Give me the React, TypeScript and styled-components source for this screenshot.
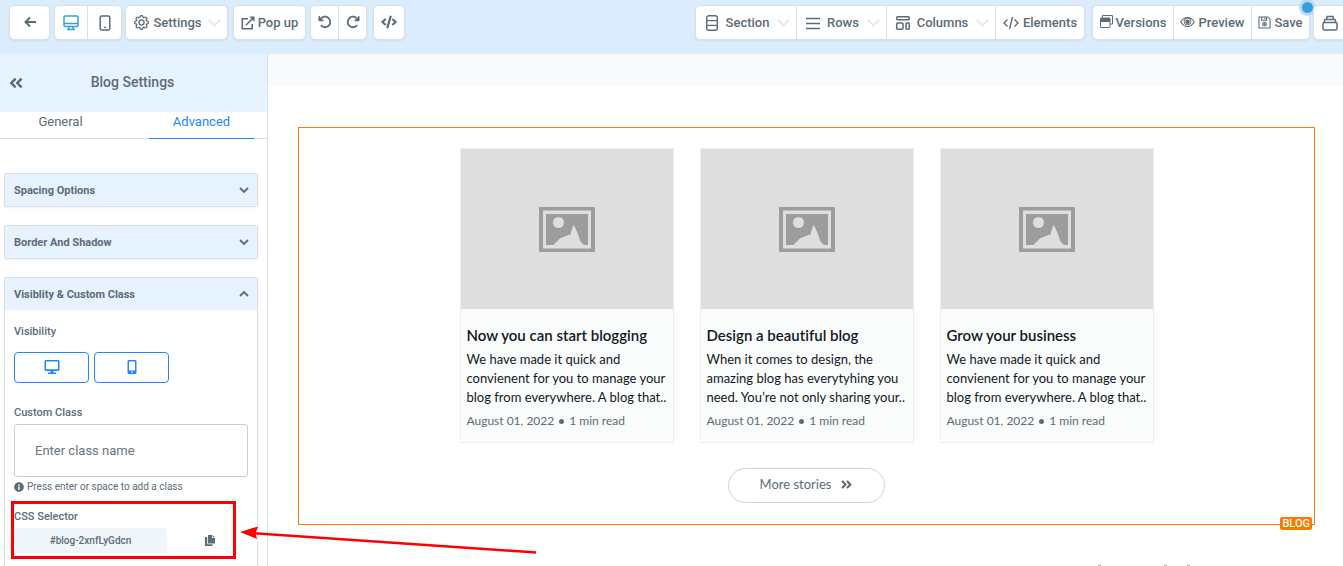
import React from 'react';
import styled, { createGlobalStyle, css } from 'styled-components';
import {
  FaAngleDoubleLeft,
  FaAngleDoubleRight,
  FaCode,
  FaInfoCircle,
} from 'react-icons/fa';
import { FaArrowRotateLeft, FaArrowRotateRight } from 'react-icons/fa6';
import { BsGear } from 'react-icons/bs';

const color = {
  bar: '#dbecfd',
  panel: '#e6f2fe',
  ink: '#5c6c75',
  line: '#dadfe4',
  blue: '#2388f7',
  orange: '#ff7900',
};

const GlobalStyle = createGlobalStyle`
  *, *::before, *::after { box-sizing: border-box; }
  body { margin: 0; background: #fff; color: ${color.ink}; font-family: Roboto, "Liberation Sans", sans-serif; }
  button, input { font: inherit; color: inherit; margin: 0; }
  button { cursor: pointer; }
  svg { display: block; flex: none; }
`;

const Page = styled.div`
  position: relative;
  display: flex;
  flex-direction: column;
  height: 100vh;
  overflow: hidden;
`;

const Toolbar = styled.header`
  display: flex;
  flex: none;
  height: 54px;
  padding: 5px 0 0 9px;
  background: ${color.bar};
  overflow: hidden;
`;

const ToolGroup = styled.div<{ $after?: number; $push?: boolean }>`
  position: relative;
  display: flex;
  flex: none;
  height: 35px;
  margin-right: ${(p) => p.$after ?? 4}px;
  ${(p) => p.$push && css`margin-left: auto;`}
  background: #fff;
  border: 1px solid ${color.line};
  border-radius: 5px;
  box-shadow: 0 1px 2px rgba(120, 150, 180, 0.15);
`;

const ToolButton = styled.button<{ $width: number; $gap?: number; $active?: boolean }>`
  display: flex;
  align-items: center;
  justify-content: center;
  gap: ${(p) => p.$gap ?? 4}px;
  width: ${(p) => p.$width}px;
  padding: 0;
  border: 0;
  background: none;
  color: ${(p) => (p.$active ? '#35a0dc' : color.ink)};
  font-size: 13px;
  font-weight: 500;
  line-height: 16px;
  white-space: nowrap;
  & + & { border-left: 1px solid ${color.line}; }
`;

const IconButton = styled(ToolButton)`
  padding-bottom: 2px;
`;

const Caret = styled.span`
  width: 9px;
  height: 9px;
  margin: 0 0 4px 4px;
  border: solid #e4e7ec;
  border-width: 0 2px 2px 0;
  transform: rotate(45deg);
`;

const NoticeDot = styled.span`
  position: absolute;
  top: -7px;
  right: -7px;
  width: 17px;
  height: 17px;
  border: 3px solid #b9dcf5;
  border-radius: 50%;
  background: #35a0dc;
`;

const Workspace = styled.div`
  display: flex;
  flex: 1;
  min-height: 0;
`;

const Sidebar = styled.aside`
  flex: none;
  width: 268px;
  border-right: 1px solid ${color.line};
  overflow: hidden;
`;

const SidebarHeader = styled.div`
  display: grid;
  grid-template-columns: 32px 1fr 34px;
  align-items: center;
  height: 58px;
  padding-bottom: 2px;
  background: ${color.panel};
`;

const CollapseButton = styled.button`
  display: flex;
  padding: 2px 0 0 8px;
  border: 0;
  background: none;
`;

const SidebarTitle = styled.h1`
  margin: 0;
  font-size: 14px;
  font-weight: 500;
  line-height: 20px;
  text-align: center;
`;

const Tabs = styled.div`
  display: flex;
  justify-content: space-between;
  height: 27px;
  padding: 0 13px 0 8px;
  border-bottom: 1px solid ${color.line};
`;

const Tab = styled.button<{ $active?: boolean }>`
  width: 105px;
  height: 27px;
  padding: 0 0 6px;
  border: 0;
  border-bottom: 1px solid ${(p) => (p.$active ? color.blue : 'transparent')};
  background: none;
  color: ${(p) => (p.$active ? color.blue : color.ink)};
  font-size: 13px;
  line-height: 18px;
`;

const Sections = styled.div`
  display: flex;
  flex-direction: column;
  gap: 18px;
  padding: 34px 9px 0 4px;
`;

const Section = styled.section`
  border: 1px solid ${color.line};
  border-radius: 2px;
  box-shadow: 0 1px 2px rgba(120, 140, 160, 0.12);
`;

const SectionToggle = styled.button`
  display: flex;
  align-items: center;
  justify-content: space-between;
  width: 100%;
  height: 32px;
  padding: 0 8px 0 9px;
  border: 0;
  background: ${color.panel};
  font-size: 11px;
  font-weight: 700;
`;

const SectionBody = styled.div`
  padding: 14px 9px 40px;
`;

const FieldLabel = styled.label`
  display: block;
  font-size: 11px;
  font-weight: 500;
  line-height: 16px;
`;

const FieldTitle = styled(FieldLabel).attrs({ as: 'div' })``;

const DeviceRow = styled.div`
  display: flex;
  gap: 5px;
  margin: 12px 0 22px;
`;

const DeviceButton = styled.button`
  display: flex;
  justify-content: center;
  align-items: center;
  width: 75px;
  height: 31px;
  padding: 0 0 2px;
  border: 1px solid ${color.blue};
  border-radius: 4px;
  background: #fff;
  color: ${color.blue};
`;

const ClassInput = styled.input`
  display: block;
  width: 100%;
  height: 53px;
  margin-top: 3px;
  padding: 0 20px;
  border: 1px solid #c6cfd9;
  border-radius: 3px;
  font-size: 13px;
  &::placeholder { color: #6c757d; opacity: 1; }
`;

const Hint = styled.p`
  display: flex;
  align-items: center;
  gap: 3px;
  margin: 3px 0 15px;
  font-size: 10px;
  line-height: 14px;
`;

const SelectorRow = styled.div`
  display: flex;
  align-items: center;
  gap: 38px;
  margin-top: 3px;
`;

const SelectorCode = styled.output`
  width: 153px;
  border-radius: 3px;
  background: #f0f5fa;
  font-size: 10px;
  font-weight: 500;
  line-height: 25px;
  text-align: center;
`;

const CopyButton = styled.button`
  display: flex;
  padding: 0;
  border: 0;
  background: none;
`;

const Canvas = styled.main`
  flex: 1;
  min-width: 0;
  overflow: hidden;
`;

const CanvasBand = styled.div`
  height: 32px;
  background: #f8fafc;
`;

const BlogBlock = styled.section`
  position: relative;
  display: flex;
  flex-direction: column;
  align-items: center;
  margin: 41px 28px 0 30px;
  padding: 20px 0 21px;
  border: 1px solid ${color.orange};
  font-family: Lato, "Liberation Sans", sans-serif;
`;

const BlockTag = styled.span`
  position: absolute;
  right: 2px;
  bottom: -6px;
  padding: 0 2px;
  border-radius: 2px;
  background: ${color.orange};
  color: #fff;
  font-family: Roboto, "Liberation Sans", sans-serif;
  font-size: 11px;
  font-weight: 500;
  line-height: 13px;
`;

const Posts = styled.div`
  display: grid;
  grid-template-columns: repeat(3, 214px);
  gap: 26px;
`;

const Post = styled.article`
  border: 1px solid #eceeef;
  background: #fafcfc;
`;

const PostImage = styled.div`
  display: flex;
  justify-content: center;
  align-items: center;
  height: 160px;
  background: #dedede;
`;

const PostBody = styled.div`
  padding: 16px 6px 13px;
`;

const PostTitle = styled.h2`
  margin: 0 0 5px;
  color: #12181f;
  font-size: 15px;
  font-weight: 600;
  line-height: 20px;
  font-variant-ligatures: none;
  white-space: nowrap;
`;

const PostText = styled.p`
  margin: 0 0 6px;
  color: #12181f;
  font-size: 13px;
  line-height: 19px;
  white-space: pre-line;
`;

const PostMeta = styled.div`
  display: flex;
  align-items: center;
  gap: 5px;
  font-size: 12px;
  line-height: 16px;
`;

const Bullet = styled.span`
  width: 5px;
  height: 5px;
  border-radius: 50%;
  background: ${color.ink};
`;

const MoreButton = styled.button`
  display: flex;
  align-items: center;
  justify-content: center;
  gap: 9px;
  width: 157px;
  height: 35px;
  margin-top: 25px;
  padding: 0 0 3px;
  border: 1px solid #cfd2dc;
  border-radius: 18px;
  background: #fff;
  font-size: 13px;
`;

const NextHeading = styled.svg`
  margin: 40px 0 0 828px;
`;

const Highlight = styled.div`
  position: absolute;
  top: 501px;
  left: 11px;
  width: 225px;
  height: 58px;
  border: 3px solid #f00;
  pointer-events: none;
`;

const Pointer = styled.svg`
  position: absolute;
  top: 520px;
  left: 240px;
  pointer-events: none;
`;

const Line = ({ size = 16, width = 2, children }: { size?: number; width?: number; children: React.ReactNode }) => (
  <svg width={size} height={size} viewBox="0 0 16 16" fill="none" stroke="currentColor" strokeWidth={width} aria-hidden="true">
    {children}
  </svg>
);

const BackIcon = () => (
  <Line><path d="M8 3.5 3.5 8 8 12.5M4 8h10" /></Line>
);

const MonitorIcon = () => (
  <Line width={1.5}>
    <rect x="1" y="1" width="14" height="10.5" rx="1.2" />
    <path d="M1 8.5h14M6 11.5v3M10 11.5v3M4 14.5h8" />
  </Line>
);

const PhoneIcon = () => (
  <Line width={1.5}>
    <rect x="3.2" y="1" width="9.6" height="14" rx="1.6" />
    <path d="M7 12.4h2" strokeWidth="1.2" />
  </Line>
);

const PopupIcon = () => (
  <Line size={14} width={1.8}>
    <path d="M8 3.2H1.5v11.3h11.3V9M5.5 10.5l8-8" />
    <path d="M9.5.5h6v6z" fill="currentColor" stroke="none" />
  </Line>
);

const SectionIcon = () => (
  <Line width={1.4}>
    <rect x="2.7" y=".8" width="10.6" height="14.4" rx="2" />
    <path d="M2.7 5.6h10.6M2.7 10.4h10.6" />
  </Line>
);

const RowsIcon = () => (
  <Line width={1.5}><path d="M1 3.5h14M1 8.5h14M1 13.5h14" /></Line>
);

const ColumnsIcon = () => (
  <Line width={1.5}>
    <rect x="1.7" y="1.7" width="12.6" height="3" rx="1" />
    <rect x="1.7" y="8" width="6.3" height="6.3" rx="1" />
    <rect x="11" y="8" width="3.3" height="6.3" rx="1" />
  </Line>
);

const ThinCodeIcon = () => (
  <Line width={1.4}><path d="M4.5 4.5 1 8l3.5 3.5M11.5 4.5 15 8l-3.5 3.5M9.5 2l-3 12" /></Line>
);

const VersionsIcon = () => (
  <svg width="13" height="15" viewBox="0 0 13 15" fill="none" stroke="currentColor" aria-hidden="true">
    <path d="M2.5 2.5V.5h10v8.5h-2" />
    <rect x=".5" y="3" width="9.5" height="9.5" rx=".5" />
    <path fill="currentColor" stroke="none" d="M.5 3H10v4H.5z" />
  </svg>
);

const EyeIcon = () => (
  <svg width="15" height="14" viewBox="0 0 15 14" fill="none" stroke="currentColor" strokeWidth="1.2" aria-hidden="true">
    <path d="M.8 6C2.5 3 4.8 1.5 7.5 1.5S12.5 3 14.2 6C12.5 9 10.2 10.5 7.5 10.5S2.5 9 .8 6z" />
    <circle cx="7.5" cy="5.5" r="3.4" strokeWidth="1" />
    <circle cx="7.5" cy="5.8" r="2.2" fill="currentColor" stroke="none" />
  </svg>
);

const SaveIcon = () => (
  <Line size={13} width={1.3}>
    <path d="M1.2 1.2h10.8l2.8 2.8v10.8H1.2z M4.5 1.5v3.7h6V1.5M8.5 2v2" />
    <circle cx="8" cy="10" r="2.3" />
    <circle cx="8" cy="10" r=".6" />
  </Line>
);

const StackIcon = () => (
  <Line width={1.5}>
    <rect x="1" y="7.5" width="14" height="7.5" rx="1.5" />
    <path d="M2 7.5l1-3h10l1 3M4.5 4.5l.5-3h6l.5 3" />
  </Line>
);

const CopyIcon = () => (
  <svg width="10" height="11" viewBox="0 0 10 11" fill="currentColor" aria-hidden="true">
    <path d="M3 0h4v3h3v5.5H3zM7.7 0 10 2.3H7.7zM0 2h2.2v7.3H7.5V11H0z" />
  </svg>
);

const ChevronIcon = ({ up = false }: { up?: boolean }) => (
  <svg width="10" height="10" viewBox="0 0 10 10" fill="none" stroke="currentColor" strokeWidth="1.8" aria-hidden="true">
    <path d={up ? 'M1 7l4-4 4 4' : 'M1 3l4 4 4-4'} />
  </svg>
);

const DesktopIcon = () => (
  <svg width="16" height="14" viewBox="0 0 16 14" fill="currentColor" aria-hidden="true">
    <path fillRule="evenodd" d="M1.5 0h13l1 1v9l-1 1H9.5v1.5H12V14H4v-1.5h2.5V11h-5l-1-1V1zM2 1.5v7.7h12V1.5z" />
  </svg>
);

const MobileIcon = () => (
  <svg width="10" height="14" viewBox="0 0 10 14" fill="currentColor" aria-hidden="true">
    <path fillRule="evenodd" d="M1.5 0h7l1 1v12l-1 1h-7l-1-1V1zM2 1.5v9h6v-9zM4.3 11.5v1.3h1.4v-1.3z" />
  </svg>
);

const PictureIcon = () => (
  <svg width="56" height="45" viewBox="0 0 56 45" aria-hidden="true">
    <path fill="#9d9d9d" fillRule="evenodd" d="M0 0h56v45H0zM4 3.5v38h48v-38z" />
    <path fill="#9d9d9d" d="M7 7h42v31H7z" />
    <circle cx="19.5" cy="15.5" r="5.5" fill="#dedede" />
    <path fill="#dedede" d="M14.5 38l6.5-6.8 10.5-4L34.5 17.5l3 6L41.5 34.5 45 38z" />
  </svg>
);

const posts = [
  {
    title: 'Now you can start blogging',
    text: 'We have made it quick and\nconvienent for you to manage your\nblog from everywhere. A blog that..',
  },
  {
    title: 'Design a beautiful blog',
    text: 'When it comes to design, the\namazing blog has everytyhing you\nneed. You’re not only sharing your..',
  },
  {
    title: 'Grow your business',
    text: 'We have made it quick and\nconvienent for you to manage your\nblog from everywhere. A blog that..',
  },
];

export default function App() {
  return (
    <Page>
      <GlobalStyle />
      <Toolbar>
        <ToolGroup>
          <IconButton $width={39} aria-label="Back"><BackIcon /></IconButton>
        </ToolGroup>
        <ToolGroup $after={3}>
          <ToolButton $width={32} $active aria-label="Desktop view"><MonitorIcon /></ToolButton>
          <ToolButton $width={34} aria-label="Mobile view"><PhoneIcon /></ToolButton>
        </ToolGroup>
        <ToolGroup $after={5}>
          <ToolButton $width={101}><BsGear size={15} strokeWidth={0.4} />Settings<Caret /></ToolButton>
        </ToolGroup>
        <ToolGroup>
          <ToolButton $width={71} $gap={3}><PopupIcon />Pop up</ToolButton>
        </ToolGroup>
        <ToolGroup $after={6}>
          <IconButton $width={27} aria-label="Undo"><FaArrowRotateLeft size={14} /></IconButton>
          <IconButton $width={28} aria-label="Redo"><FaArrowRotateRight size={14} /></IconButton>
        </ToolGroup>
        <ToolGroup>
          <IconButton $width={30} aria-label="Code"><FaCode size={16} /></IconButton>
        </ToolGroup>

        <ToolGroup $push $after={7}>
          <ToolButton $width={100} $gap={6}><SectionIcon />Section<Caret /></ToolButton>
          <ToolButton $width={90} $gap={6}><RowsIcon />Rows<Caret /></ToolButton>
          <ToolButton $width={109} $gap={6}><ColumnsIcon />Columns<Caret /></ToolButton>
          <ToolButton $width={89}><ThinCodeIcon />Elements</ToolButton>
        </ToolGroup>
        <ToolGroup $after={3}>
          <ToolButton $width={80} $gap={3}><VersionsIcon />Versions</ToolButton>
          <ToolButton $width={78} $gap={3}><EyeIcon />Preview</ToolButton>
          <ToolButton $width={58} $gap={3}><SaveIcon />Save</ToolButton>
          <NoticeDot />
        </ToolGroup>
        <ToolGroup $after={-4}>
          <ToolButton $width={32} aria-label="Layers"><StackIcon /></ToolButton>
        </ToolGroup>
      </Toolbar>

      <Workspace>
        <Sidebar>
          <SidebarHeader>
            <CollapseButton aria-label="Collapse panel"><FaAngleDoubleLeft size={16} /></CollapseButton>
            <SidebarTitle>Blog Settings</SidebarTitle>
          </SidebarHeader>
          <Tabs role="tablist">
            <Tab role="tab" aria-selected={false}>General</Tab>
            <Tab role="tab" aria-selected $active>Advanced</Tab>
          </Tabs>
          <Sections>
            <Section>
              <SectionToggle aria-expanded={false}>Spacing Options<ChevronIcon /></SectionToggle>
            </Section>
            <Section>
              <SectionToggle aria-expanded={false}>Border And Shadow<ChevronIcon /></SectionToggle>
            </Section>
            <Section>
              <SectionToggle aria-expanded>Visiblity &amp; Custom Class<ChevronIcon up /></SectionToggle>
              <SectionBody>
                <FieldTitle>Visibility</FieldTitle>
                <DeviceRow>
                  <DeviceButton aria-label="Show on desktop"><DesktopIcon /></DeviceButton>
                  <DeviceButton aria-label="Show on mobile"><MobileIcon /></DeviceButton>
                </DeviceRow>
                <FieldLabel htmlFor="class-name">Custom Class</FieldLabel>
                <ClassInput id="class-name" type="text" placeholder="Enter class name" />
                <Hint><FaInfoCircle size={10} />Press enter or space to add a class</Hint>
                <FieldLabel htmlFor="css-selector">CSS Selector</FieldLabel>
                <SelectorRow>
                  <SelectorCode id="css-selector">#blog-2xnfLyGdcn</SelectorCode>
                  <CopyButton aria-label="Copy selector"><CopyIcon /></CopyButton>
                </SelectorRow>
              </SectionBody>
            </Section>
          </Sections>
        </Sidebar>

        <Canvas>
          <CanvasBand />
          <BlogBlock>
            <Posts>
              {posts.map((post) => (
                <Post key={post.title}>
                  <PostImage><PictureIcon /></PostImage>
                  <PostBody>
                    <PostTitle>{post.title}</PostTitle>
                    <PostText>{post.text}</PostText>
                    <PostMeta>August 01, 2022<Bullet />1 min read</PostMeta>
                  </PostBody>
                </Post>
              ))}
            </Posts>
            <MoreButton>More stories<FaAngleDoubleRight size={13} /></MoreButton>
            <BlockTag>BLOG</BlockTag>
          </BlogBlock>
          <NextHeading width="100" height="1" viewBox="0 0 100 1" aria-hidden="true">
            <path fill="#aaa" d="M2 0h3v1H2zM68 0h3v1h-3zM91 0h3v1h-3z" />
          </NextHeading>
        </Canvas>
      </Workspace>

      <Highlight />
      <Pointer width="300" height="40" viewBox="0 0 300 40" aria-hidden="true">
        <path d="M12 13 296 32.5" stroke="#f00" strokeWidth="2.5" />
        <path d="M0 12 18 6.5 15.5 13.5 17 19z" fill="#f00" />
      </Pointer>
    </Page>
  );
}
